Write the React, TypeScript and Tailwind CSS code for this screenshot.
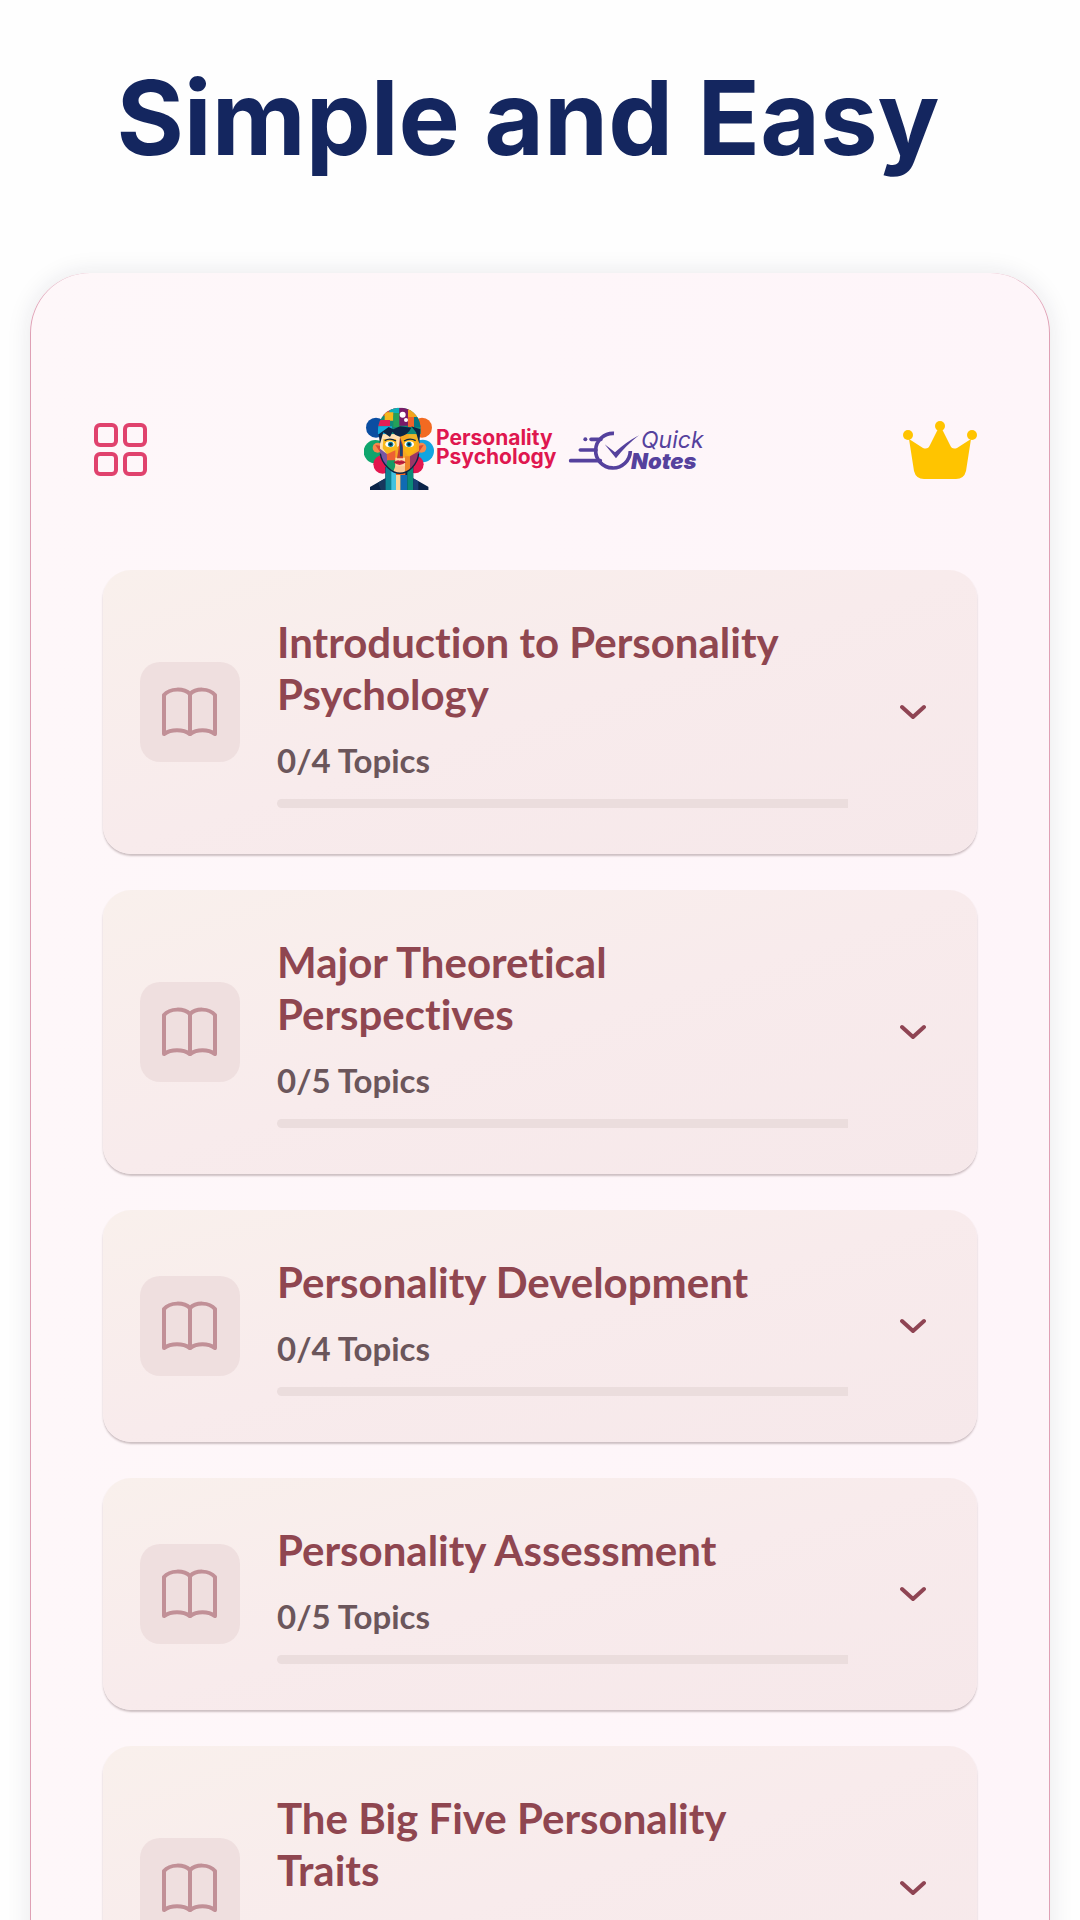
import React from "react";

type Chapter = {
  title: string;
  done: number;
  total: number;
};

const chapters: Chapter[] = [
  { title: "Introduction to Personality Psychology", done: 0, total: 4 },
  { title: "Major Theoretical Perspectives", done: 0, total: 5 },
  { title: "Personality Development", done: 0, total: 4 },
  { title: "Personality Assessment", done: 0, total: 5 },
  { title: "The Big Five Personality Traits", done: 0, total: 5 },
];

const GridIcon = () => (
  <svg width="54" height="54" viewBox="0 0 54 54" fill="none" stroke="#e0426d" strokeWidth="4" aria-hidden="true">
    <rect x="2" y="2" width="20" height="20" rx="4" />
    <rect x="31" y="2" width="20" height="20" rx="4" />
    <rect x="2" y="31" width="20" height="20" rx="4" />
    <rect x="31" y="31" width="20" height="20" rx="4" />
  </svg>
);

const CrownIcon = () => (
  <svg width="74" height="58" viewBox="0 0 74 58" fill="#ffc400" aria-hidden="true">
    <circle cx="5" cy="14" r="5" />
    <circle cx="37" cy="5" r="5" />
    <circle cx="69" cy="14" r="5" />
    <path d="M6 18 L20 27 Q25 29 27 24 L35 8 H39 L47 24 Q49 29 54 27 L68 18 L63 50 Q61 58 53 58 H21 Q13 58 11 50 Z" />
  </svg>
);

const BookIcon = () => (
  <svg
    width="56"
    height="50"
    viewBox="0 0 56 50"
    fill="none"
    stroke="#c19097"
    strokeWidth="4"
    strokeLinecap="round"
    strokeLinejoin="round"
    aria-hidden="true"
  >
    <path d="M28 7 C22 1 8 1 2 8 V47 C9 42 21 42 28 47 C35 42 46 42 53 47 V8 C47 1 34 1 28 7 Z" />
    <path d="M28 7 V47" />
  </svg>
);

const ChevronIcon = () => (
  <svg
    width="26"
    height="16"
    viewBox="0 0 26 16"
    fill="none"
    stroke="#8f4453"
    strokeWidth="4"
    strokeLinecap="round"
    strokeLinejoin="round"
    aria-hidden="true"
  >
    <path d="M2 3 L13 13 L24 3" />
  </svg>
);

/** Brand lockup: mosaic portrait, app name and the "Quick Notes" mark */
const Logo = () => (
  <svg width="340" height="86" viewBox="0 0 340 86" role="img" aria-label="Personality Psychology Quick Notes">
    <defs>
      <clipPath id="hair">
        <path d="M84 118 C80 70 110 38 150 38 C190 38 216 70 212 118 Z" />
      </clipPath>
      <clipPath id="face">
        <path d="M90 108 Q150 96 207 108 V176 Q204 200 186 218 Q150 252 114 218 Q94 200 90 176 Z" />
      </clipPath>
      <clipPath id="body">
        <path d="M60 285 V276 L106 250 V215 H190 V250 L236 276 V285 Z" />
      </clipPath>
    </defs>
    <g transform="translate(-14 -12) scale(.3333)">
      <circle cx="78" cy="98" r="30" fill="#0b4ea2" />
      <circle cx="216" cy="98" r="30" fill="#f26a21" />
      <circle cx="76" cy="170" r="35" fill="#10a56d" />
      <circle cx="218" cy="168" r="34" fill="#12a5e0" />
      <circle cx="98" cy="208" r="28" fill="#e2174f" />
      <circle cx="194" cy="208" r="27" fill="#e2174f" />
      <g clipPath="url(#body)">
        <path d="M60 210 H240 V290 H60 Z" fill="#0a2348" />
        <path d="M106 215 H128 V290 H106 Z" fill="#0d8493" />
        <path d="M124 215 H146 V290 H124 Z" fill="#42c2e0" />
        <path d="M138 215 H166 V240 H138 Z" fill="#f2661f" />
        <path d="M138 240 H152 V290 H138 Z" fill="#ffd699" />
        <path d="M152 240 H172 V290 H152 Z" fill="#106bb3" />
        <path d="M172 215 H190 V290 H172 Z" fill="#0b8b78" />
        <path d="M190 250 L205 258 V290 H190 Z" fill="#1a3f75" />
        <path d="M84 262 L106 250 V290 H94 Z" fill="#17375d" />
      </g>
      <circle cx="83" cy="158" r="15" fill="#f58a4b" />
      <circle cx="214" cy="158" r="15" fill="#f58a4b" />
      <path d="M76 150 L90 152 V171 Z M221 150 L207 152 V171 Z" fill="#d64a35" />
      <g clipPath="url(#face)">
        <path d="M88 95 H210 V245 H88 Z" fill="#f5a623" />
        <path d="M88 95 H122 V136 H88 Z" fill="#ffd9a0" />
        <path d="M122 95 H150 V150 L110 180 L88 160 V132 Z" fill="#ffe0b2" />
        <path d="M176 112 H210 V136 H176 Z" fill="#f0b429" />
        <path d="M100 132 H138 L142 163 L112 180 L98 160 Z" fill="#f8b91c" />
        <path d="M158 132 H200 V164 L176 184 L160 165 Z" fill="#fbb515" />
        <path d="M88 160 L112 178 V220 H88 Z" fill="#7655a4" />
        <path d="M110 178 L136 166 V200 H112 Z" fill="#ed6033" />
        <path d="M112 196 H136 V240 L108 218 Z" fill="#159b65" />
        <path d="M136 188 H166 V222 H136 Z" fill="#ffd8a8" />
        <path d="M136 214 H166 V245 H124 Z" fill="#fbc994" />
        <path d="M165 184 H192 V234 H165 Z" fill="#ed8528" />
        <path d="M180 184 L210 166 V222 H180 Z" fill="#9b3566" />
        <path d="M150 126 L159 150 V190 H141 L146 160 Z" fill="#c44132" />
        <path d="M150 130 L158 158 V184 H150 Z" fill="#1d426f" />
      </g>
      <path d="M91 176 Q94 200 114 218 Q150 252 186 218 Q204 200 206 176" fill="none" stroke="#0b2446" strokeWidth="4" />
      <g clipPath="url(#hair)">
        <path d="M80 35 H216 V120 H80 Z" fill="#128b78" />
        <path d="M80 35 H142 V62 H80 Z" fill="#eb3f3e" />
        <path d="M118 35 H148 V54 H118 Z" fill="#0cb0bb" />
        <path d="M104 52 H130 V77 H104 Z" fill="#f4b71c" />
        <path d="M130 54 H152 V96 H130 Z" fill="#24a159" />
        <path d="M80 75 H120 V94 H80 Z" fill="#e41e54" />
        <path d="M80 94 H126 V120 H80 Z" fill="#14a9dc" />
        <path d="M148 35 H176 V92 H148 Z" fill="#7a1b68" />
        <path d="M174 35 H202 V68 H174 Z" fill="#f2a31d" />
        <path d="M174 66 H194 V96 H174 Z" fill="#ef622b" />
        <path d="M192 66 H216 V96 H192 Z" fill="#067783" />
      </g>
      <path d="M86 118 L116 96 L130 103 L150 94 L184 98 Q174 120 150 125 Q132 120 128 110 L120 126 L100 112 L90 146 Z" fill="#0b2446" />
      <path d="M184 94 L211 103 L208 146 L198 112 Z" fill="#0b2446" />
      <circle cx="158" cy="59" r="9" fill="#fff" />
      <circle cx="168" cy="75" r="6" fill="#fff" />
      <path d="M104 137 Q120 127 138 138 M162 138 Q180 127 197 137" fill="none" stroke="#0b2446" strokeWidth="4" />
      <ellipse cx="120" cy="148" rx="14" ry="9" fill="#fff" />
      <ellipse cx="178" cy="148" rx="14" ry="9" fill="#fff" />
      <circle cx="122" cy="148" r="8" fill="#087e96" />
      <circle cx="177" cy="148" r="8" fill="#087e96" />
      <circle cx="122" cy="148" r="4" fill="#071c38" />
      <circle cx="177" cy="148" r="4" fill="#071c38" />
      <path d="M131 202 Q142 193 149 197 Q156 193 167 202 Q149 218 131 202 Z" fill="#cc2442" />
      <path d="M132 202 H166" stroke="#861e34" strokeWidth="2" />
    </g>
    <g fill="#df174f" fontFamily="Inter, 'Liberation Sans', sans-serif" fontSize="21" fontWeight="700">
      <text x="72" y="38">Personality</text>
      <text x="72" y="57">Psychology</text>
    </g>
    <g transform="translate(176 -12) scale(.3333)" stroke="#55419d" fill="none" strokeLinecap="round">
      <path d="M222 115 A52 52 0 1 0 271 168" strokeWidth="11" strokeLinecap="butt" />
      <path d="M153 133 H183 M121 165 H168 M92 197 H181" strokeWidth="11" />
      <circle cx="136" cy="133" r="6" fill="#55419d" stroke="none" />
      <path d="M194 148 L225 172 Q257 142 297 121 Q259 150 228 190 Z" fill="#55419d" stroke="none" />
    </g>
    <g fill="#55419d" fontFamily="Inter, 'Liberation Sans', sans-serif" fontStyle="italic">
      <text x="277" y="41" fontSize="23" fontWeight="400">Quick</text>
      <text x="267" y="62" fontSize="22" fontWeight="900">Notes</text>
    </g>
  </svg>
);

const ChapterCard = ({ chapter }: { chapter: Chapter }) => (
  <button
    type="button"
    aria-expanded={false}
    className="flex w-full items-center rounded-[28px] bg-linear-to-br from-[#f9f0ec] via-[#f8ebec] to-[#f6e8ea] py-[46px] pr-[51px] pl-[37px] text-left shadow-[0_2px_2px_rgba(80,50,55,0.28)]"
  >
    <span className="flex size-[100px] shrink-0 items-center justify-center rounded-[20px] bg-[#efdfdf]">
      <BookIcon />
    </span>
    <span className="ml-[37px] flex min-w-0 flex-1 flex-col [font-variant-ligatures:none]">
      <span className="pr-6 text-[42px] leading-[52px] font-bold text-[#8f4650]">{chapter.title}</span>
      <span className="mt-5 text-[33px] leading-[40px] font-bold text-[#6b565b]">
        {chapter.done}/{chapter.total} Topics
      </span>
      <span
        role="progressbar"
        aria-label={chapter.title}
        aria-valuenow={chapter.done}
        aria-valuemax={chapter.total}
        className="mt-[19px] block h-[9px] overflow-hidden rounded-l-full bg-[#ebdddd]"
      >
        <span
          className="block h-full bg-[#8f4650]"
          style={{ width: `${(chapter.done / chapter.total) * 100}%` }}
        />
      </span>
    </span>
    <span className="ml-[52px] shrink-0">
      <ChevronIcon />
    </span>
  </button>
);

export default function App() {
  return (
    <main className="h-screen overflow-hidden bg-[#fefefe] px-[30px] font-[Lato,'Noto_Sans',sans-serif]">
      <h1 className="pt-[58px] pr-6 text-center font-[Inter,'Liberation_Sans',sans-serif] text-[103px] leading-[120px] font-bold text-[#14265f]">
        Simple and Easy
      </h1>

      <section className="mt-[95px] min-h-screen rounded-t-[60px] border-x border-[#dfa0b5] bg-linear-to-r from-[#fef7f9] to-[#fef5f9] px-[72px] pt-[134px] shadow-[0_0_24px_rgba(30,30,60,0.1)]">
        <header className="-ml-[9px] flex items-center justify-between">
          <button type="button" aria-label="Menu" className="flex w-[70px] justify-start">
            <GridIcon />
          </button>
          <Logo />
          <button type="button" aria-label="Premium">
            <CrownIcon />
          </button>
        </header>

        <div className="mt-[77px] flex flex-col gap-9">
          {chapters.map((chapter) => (
            <ChapterCard key={chapter.title} chapter={chapter} />
          ))}
        </div>
      </section>
    </main>
  );
}
